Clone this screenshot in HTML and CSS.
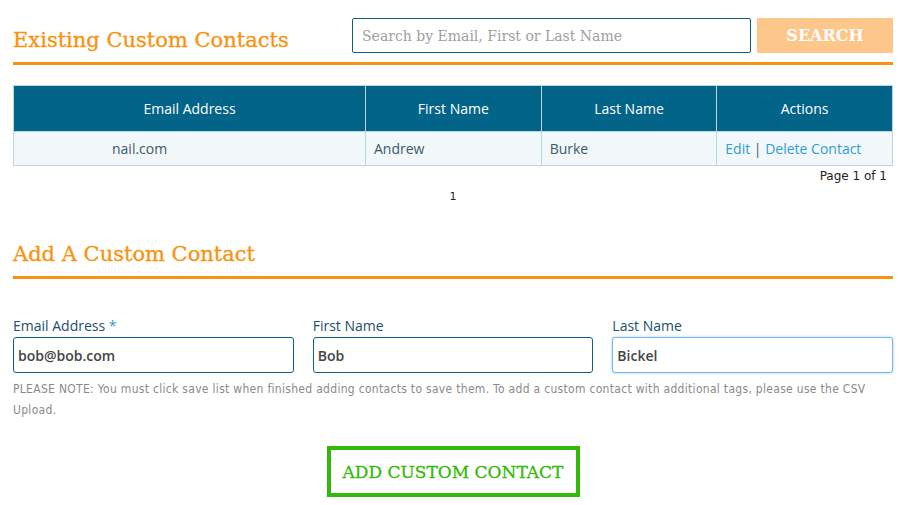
FILE: index.html
```html
<!DOCTYPE html>
<html lang="en">
<head>
    <meta charset="UTF-8">
    <meta name="viewport" content="width=device-width, initial-scale=1.0">
    <title>Custom Contacts</title>
    <link rel="stylesheet" href="styles.css">
</head>
<body>
    <main class="page">
        <section class="section-head">
            <h2 class="section-title">Existing Custom Contacts</h2>
            <form class="search">
                <input type="text" class="search-input" placeholder="Search by Email, First or Last Name">
                <button type="button" class="search-btn">SEARCH</button>
            </form>
        </section>

        <table class="contacts">
            <thead>
                <tr>
                    <th class="col-email">Email Address</th>
                    <th>First Name</th>
                    <th>Last Name</th>
                    <th>Actions</th>
                </tr>
            </thead>
            <tbody>
                <tr>
                    <td class="cell-email">nail.com</td>
                    <td>Andrew</td>
                    <td>Burke</td>
                    <td><a href="#">Edit</a> | <a href="#">Delete Contact</a></td>
                </tr>
            </tbody>
        </table>
        <div class="page-count">Page 1 of 1</div>
        <div class="pager">1</div>

        <section class="section-head section-add">
            <h2 class="section-title">Add A Custom Contact</h2>
        </section>

        <form class="add-form">
            <div class="fields">
                <div class="field">
                    <label for="email">Email Address <span class="req">*</span></label>
                    <input type="text" id="email" value="bob@bob.com">
                </div>
                <div class="field">
                    <label for="firstName">First Name</label>
                    <input type="text" id="firstName" value="Bob">
                </div>
                <div class="field">
                    <label for="lastName">Last Name</label>
                    <input type="text" id="lastName" class="focused" value="Bickel">
                </div>
            </div>
            <p class="note">PLEASE NOTE: You must click save list when finished adding contacts to save them. To add a custom contact with additional tags, please use the CSV Upload.</p>
            <div class="actions">
                <button type="button" class="add-btn">ADD CUSTOM CONTACT</button>
            </div>
        </form>
    </main>
</body>
</html>
```

FILE: styles.css
```css
body {
    margin: 0;
    padding: 0;
    background: #fff;
    font-family: "Open Sans", sans-serif;
    color: #333;
}

.page {
    padding: 18px 7px 0 13px;
}

.section-head {
    display: flex;
    align-items: flex-end;
    justify-content: space-between;
    border-bottom: 3px solid #f7930f;
    padding-bottom: 9px;
}

.section-title {
    margin: 0;
    font-family: "DejaVu Serif", serif;
    font-weight: normal;
    font-size: 21px;
    color: #f7930f;
    line-height: 26px;
    -webkit-text-stroke: 0.3px #f7930f;
}

.search {
    display: flex;
    gap: 6px;
}

.search-input {
    width: 399px;
    height: 35px;
    box-sizing: border-box;
    border: 1px solid #0d6185;
    border-radius: 2px;
    padding: 0 9px;
    font-family: "DejaVu Serif", serif;
    font-size: 14px;
    color: #333;
}

.search-input::placeholder {
    color: #a0a0a0;
}

.search-btn {
    width: 136px;
    height: 35px;
    border: none;
    background: #fdc68b;
    color: #fff;
    font-family: "DejaVu Serif", serif;
    font-weight: bold;
    font-size: 16px;
}

.contacts {
    width: 880px;
    border-collapse: collapse;
    margin-top: 20px;
    font-size: 14px;
    table-layout: fixed;
}

.contacts th, .contacts td {
    border: 1px solid #bad6e3;
}

.contacts th {
    background: #026488;
    color: #fff;
    font-weight: normal;
    height: 45px;
    padding: 0;
}

.contacts th.col-email {
    width: 351px;
}

.contacts td {
    background: #f2f7fa;
    color: #3d5a69;
    height: 33px;
    padding: 0 8px;
}

.contacts td.cell-email {
    padding-left: 98px;
}

.contacts a {
    color: #2f9dd6;
    text-decoration: none;
}

.page-count {
    text-align: right;
    font-family: "DejaVu Sans", sans-serif;
    font-size: 12px;
    color: #222;
    padding: 3px 6px 0 0;
    height: 17px;
}

.pager {
    text-align: center;
    font-family: "DejaVu Sans", sans-serif;
    font-size: 11px;
    color: #222;
    margin-top: 4px;
}

.section-add {
    margin-top: 38px;
    padding-bottom: 9px;
}

.add-form {
    margin-top: 38px;
}

.fields {
    display: flex;
    gap: 19px;
}

.field {
    flex: 1;
    display: flex;
    flex-direction: column;
}

.field label {
    font-size: 14px;
    color: #20506a;
    line-height: 18px;
    margin-bottom: 2px;
}

.req {
    color: #2f9dd6;
}

.field input {
    height: 36px;
    box-sizing: border-box;
    border: 1px solid #0d6185;
    border-radius: 3px;
    padding: 0 4px;
    font-family: "Open Sans", sans-serif;
    font-size: 14px;
    font-weight: 600;
    color: #444;
}

.field input.focused {
    border-color: #77b8e6;
    box-shadow: 0 0 3px #9ccdf0;
    outline: none;
}

.note {
    margin: 6px 0 0;
    font-family: "DejaVu Sans", sans-serif;
    font-stretch: condensed;
    font-size: 12px;
    letter-spacing: 0.3px;
    line-height: 21px;
    color: #8a8a8a;
}

.actions {
    text-align: center;
    margin-top: 25px;
}

.add-btn {
    width: 253px;
    height: 51px;
    background: #fff;
    border: 4px solid #33b90a;
    color: #33b90a;
    font-family: "DejaVu Serif", serif;
    font-size: 17px;
    -webkit-text-stroke: 0.3px #33b90a;
}
```
